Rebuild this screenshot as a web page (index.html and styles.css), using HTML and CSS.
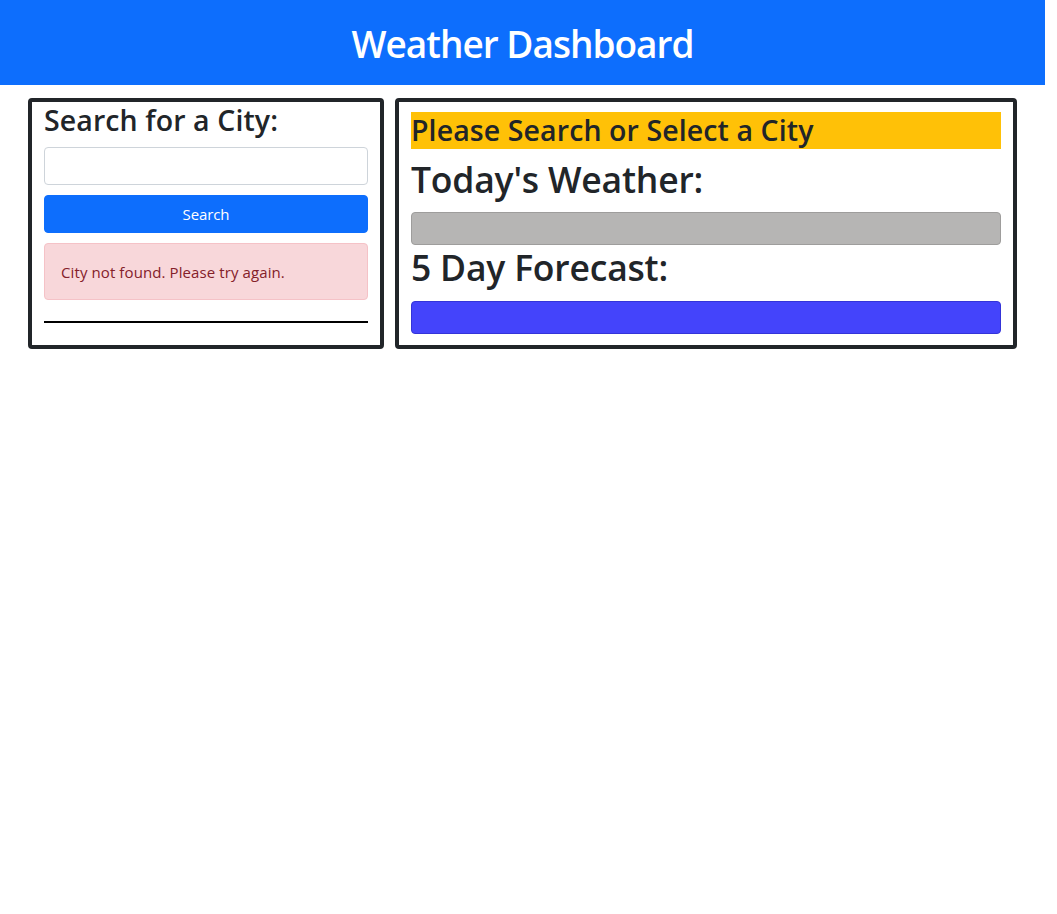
FILE: index.html
```html
<!DOCTYPE html>
<html lang="en">
<head>
<meta charset="utf-8">
<title>Weather Dashboard</title>
<link rel="stylesheet" href="styles.css">
</head>
<body>
<div class="page">
  <header class="topbar">
    <h1 class="title">Weather Dashboard</h1>
  </header>
  <main class="layout">
    <section class="card search-card">
      <h2 class="h2 search-title">Search for a City:</h2>
      <input class="city-input" type="text" aria-label="City">
      <button class="search-btn" type="button">Search</button>
      <div class="alert">City not found. Please try again.</div>
      <hr class="divider">
    </section>
    <section class="card weather-card">
      <h2 class="h2 prompt">Please Search or Select a City</h2>
      <h1 class="h1 section-title">Today's Weather:</h1>
      <div class="bar today-bar"></div>
      <h1 class="h1 section-title forecast-title">5 Day Forecast:</h1>
      <div class="bar forecast-bar"></div>
    </section>
  </main>
</div>
</body>
</html>
```

FILE: styles.css
```css
* { box-sizing: border-box; }
html, body { margin: 0; padding: 0; background: #fff; }
body {
  font-family: "Open Sans", "Noto Sans", Arial, sans-serif;
  color: #212529;
  font-size: 16px;
}
.page { width: 1045px; }
.topbar {
  height: 85px;
  background: #0d6efd;
  display: flex;
  align-items: center;
  justify-content: center;
}
.title {
  margin: 0;
  color: #fff;
  font-size: 37px;
  font-weight: 600;
  letter-spacing: -1px;
  line-height: 1.2;
  padding-top: 3px;
}
.layout {
  display: flex;
  gap: 11px;
  padding: 13px 28px 0 28px;
  align-items: stretch;
}
.card {
  border: 4px solid #212529;
  border-radius: 4px;
  background: #fff;
}
.search-card {
  width: 356px;
  padding: 0 12px 22px 12px;
  display: flex;
  flex-direction: column;
}
.weather-card {
  width: 622px;
  padding: 10px 12px 11px 12px;
  display: flex;
  flex-direction: column;
}
.h2 {
  margin: 0;
  font-size: 28.5px;
  font-weight: 600;
  line-height: 37px;
  letter-spacing: 0.1px;
}
.h1 {
  margin: 0;
  font-size: 35.5px;
  font-weight: 600;
  line-height: 45px;
  letter-spacing: -0.2px;
}
.search-title { margin-bottom: 8px; }
.city-input {
  height: 38px;
  width: 100%;
  border: 1px solid #ced4da;
  border-radius: 4px;
  margin: 0 0 10px 0;
  padding: 6px 12px;
  font: inherit;
}
.search-btn {
  height: 38px;
  width: 100%;
  border: 1px solid #0d6efd;
  background: #0d6efd;
  color: #fff;
  border-radius: 4px;
  font-family: inherit;
  font-size: 15px;
  letter-spacing: -0.1px;
  margin: 0 0 10px 0;
  padding: 0;
}
.alert {
  height: 57px;
  background: #f8d7da;
  border: 1px solid #f5c2c7;
  border-radius: 4px;
  color: #842029;
  font-size: 15px;
  letter-spacing: 0.1px;
  padding: 0 16px;
  display: flex;
  align-items: center;
}
.divider {
  margin: 21px 0 0 0;
  border: 0;
  border-top: 2px solid #000;
  opacity: 1;
  height: 0;
}
.prompt {
  background: #ffc107;
  margin-bottom: 8px;
}
.section-title { margin-bottom: 10px; }
.forecast-title { margin-bottom: 11px; }
.bar {
  height: 33px;
  border-radius: 4px;
}
.today-bar {
  background: #b6b5b4;
  border: 1px solid #9e9d9c;
}
.forecast-bar {
  background: #4444fb;
  border: 1px solid #3434d8;
}
```
